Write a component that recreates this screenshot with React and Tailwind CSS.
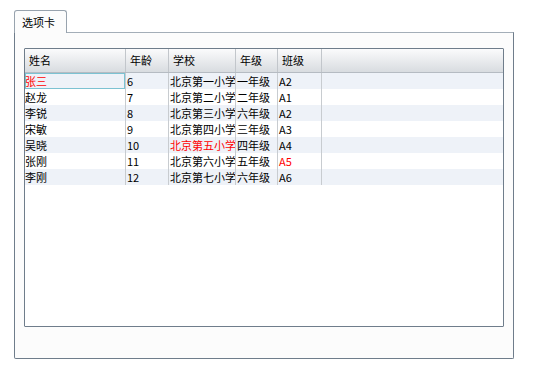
import React from 'react';

const COLS = [
  { key: 'name', label: '姓名', w: 'w-[101px]' },
  { key: 'age', label: '年龄', w: 'w-[43px]' },
  { key: 'school', label: '学校', w: 'w-[67px]' },
  { key: 'grade', label: '年级', w: 'w-[42px]' },
  { key: 'cls', label: '班级', w: 'w-[44px]' },
];

const ROWS = [
  { name: '张三', age: '6', school: '北京第一小学', grade: '一年级', cls: 'A2', red: ['name'] },
  { name: '赵龙', age: '7', school: '北京第二小学', grade: '二年级', cls: 'A1' },
  { name: '李锐', age: '8', school: '北京第三小学', grade: '六年级', cls: 'A2' },
  { name: '宋敏', age: '9', school: '北京第四小学', grade: '三年级', cls: 'A3' },
  { name: '吴晓', age: '10', school: '北京第五小学', grade: '四年级', cls: 'A4', red: ['school'] },
  { name: '张刚', age: '11', school: '北京第六小学', grade: '五年级', cls: 'A5', red: ['cls'] },
  { name: '李刚', age: '12', school: '北京第七小学', grade: '六年级', cls: 'A6' },
];

export default function App() {
  return (
    <div className="w-[533px] h-[367px] bg-white pt-[10px] text-[11px] text-black" style={{ fontFamily: '"Noto Sans CJK SC", "Noto Sans", sans-serif' }}>
      {/* Tab header */}
      <div className="relative z-10 ml-[14px] w-[53px] h-[23px] -mb-px bg-[#fcfcfc] border border-b-0 border-[#98a3ae] rounded-t-[3px] pl-[7px] pt-[4px] leading-[14px]">
        选项卡
      </div>

      {/* Tab page */}
      <div className="ml-[14px] w-[500px] h-[327px] bg-[#fcfcfc] border border-[#6f7d8b] border-t-[#a4aeb8] rounded-b-[2px] pl-[9px] pt-[15px]">
        <div className="w-[480px] h-[279px] bg-white border border-[#6f7d8b] rounded-[1px] overflow-hidden">
          {/* header */}
          <div className="flex h-[24px] bg-gradient-to-b from-[#fbfbfc] to-[#d8dce0] border-b border-[#b5bbc2]">
            {COLS.map(c => (
              <div key={c.key} className={`${c.w} shrink-0 border-r border-[#c2c6cb] pl-[4px] flex items-center`}>
                {c.label}
              </div>
            ))}
            <div className="flex-1" />
          </div>

          {/* rows */}
          {ROWS.map((r, i) => (
            <div key={i} className={`flex h-[16px] ${i % 2 === 0 ? 'bg-[#eef2f8]' : 'bg-white'}`}>
              {COLS.map((c, j) => (
                <div key={c.key}
                  className={`${c.w} shrink-0 border-r border-[#c8ccd0] leading-[16px] whitespace-nowrap overflow-hidden ${j === 0 ? 'pl-0' : 'pl-px'} ${r.red?.includes(c.key) ? 'text-[#ff0000]' : ''} ${i === 0 && j === 0 ? 'relative z-10 shadow-[inset_0_0_0_1px_#7cc2d2]' : ''}`}>
                  {r[c.key]}
                </div>
              ))}
              <div className="flex-1" />
            </div>
          ))}
        </div>
      </div>
    </div>
  );
}
